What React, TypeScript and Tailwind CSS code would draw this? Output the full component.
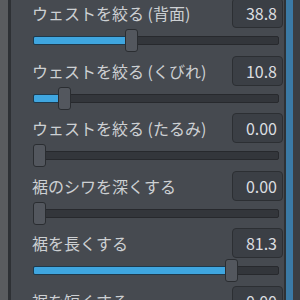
import React from "react";

type Param = {
  label: string;
  value: number;
  digits: number;
};

const PARAMS: Param[] = [
  { label: "ウェストを絞る (背面)", value: 38.8, digits: 1 },
  { label: "ウェストを絞る (くびれ)", value: 10.8, digits: 1 },
  { label: "ウェストを絞る (たるみ)", value: 0, digits: 2 },
  { label: "裾のシワを深くする", value: 0, digits: 2 },
  { label: "裾を長くする", value: 81.3, digits: 1 },
  { label: "裾を短くする", value: 0, digits: 2 },
];

// handle travel in px for the 0..100 range
const TRAVEL = 236;

function SliderRow({ label, value, digits }: Param) {
  const left = Math.round((value / 100) * TRAVEL);

  return (
    <div className="flex flex-col">
      <div className="flex h-[30px] items-center justify-between">
        <span className="pl-[21px] text-[16px] leading-none text-[#cdd0d3]">
          {label}
        </span>
        <div className="flex h-[30px] w-[51px] items-center justify-end rounded-[4px] border border-[#2c2f33] bg-[#3b3f45] pr-[5px] text-[16px] leading-none text-[#dcdee0]">
          {value.toFixed(digits)}
        </div>
      </div>
      <div className="relative ml-[22px] h-[27.5px] w-[246px]">
        <div className="absolute top-[8px] h-[9px] w-full rounded-[2px] border border-[#27292d] bg-[#33363b]" />
        {value > 0 && (
          <div
            className="absolute top-[8px] h-[9px] rounded-l-[2px] border border-[#1e3a4d] bg-[#3fa6e0]"
            style={{ width: left + 2 }}
          />
        )}
        <div
          className="absolute top-[1px] h-[23px] w-[13px] rounded-[3px] border border-[#2a2d31] bg-[#53575e]"
          style={{ left }}
        />
      </div>
    </div>
  );
}

export default function App() {
  return (
    <div
      className="flex h-[300px] w-[300px] overflow-hidden bg-[#464a50]"
      style={{ fontFamily: '"Noto Sans CJK JP", "Noto Sans", sans-serif' }}
    >
      <div className="w-[8px] shrink-0 bg-[#5a5c5f]" />
      <div className="w-[3px] shrink-0 bg-[#2e3135]" />
      <div className="flex min-w-0 flex-1 flex-col pr-[1px] -mt-[2px]">
        {PARAMS.map((p) => (
          <SliderRow key={p.label} {...p} />
        ))}
      </div>
      <div className="w-[2px] shrink-0 bg-[#2e3236]" />
      <div className="w-[7px] shrink-0 bg-[#3b7aa5]" />
      <div className="w-[7px] shrink-0 bg-[#3b3e42]" />
    </div>
  );
}
